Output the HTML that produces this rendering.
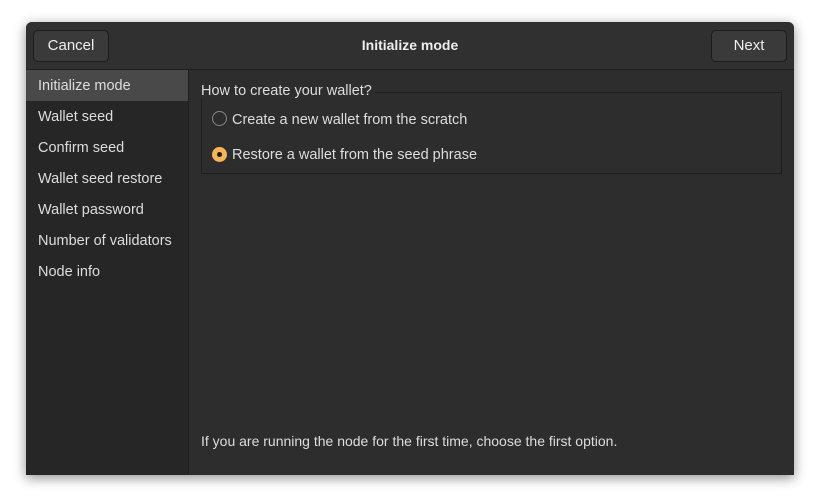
<!DOCTYPE html>
<html><head><style>
body{margin:0;width:820px;height:504px;background:#fff;font-family:"Liberation Sans",sans-serif;position:relative;overflow:hidden}
.win{position:absolute;left:26px;top:22px;width:768px;height:453px;background:#2d2d2d;border-radius:6px 6px 0 0;box-shadow:0 3px 12px rgba(0,0,0,.45);overflow:hidden}
.hdr{position:absolute;left:0;top:0;width:768px;height:47px;background:#303030;border-bottom:1px solid #1f1f1f}
.btn{position:absolute;top:8px;height:30px;width:74px;background:#3a3a3a;border:1px solid #1c1c1c;border-radius:5px;color:#eee;font-size:15px;line-height:30px;text-align:center}
.title{position:absolute;left:0;right:0;top:0;line-height:47px;text-align:center;color:#eee;font-weight:bold;font-size:14px}
.side{position:absolute;left:0;top:48px;width:162px;height:405px;background:#262626;border-right:1px solid #1e1e1e}
.row{height:31px;line-height:33px;padding-left:12px;color:#ddd;font-size:14.5px}
.row.sel{background:#494949}
.t{position:absolute;color:#ddd;font-size:14.5px}
.frame{position:absolute;left:175px;top:70px;width:579px;height:80px;border:1px solid #1f1f1f}
.radio{position:absolute;width:15px;height:15px;border-radius:50%;border:1px solid #888;box-sizing:border-box}
</style></head><body>
<div class="win">
 <div class="hdr">
  <div class="title">Initialize mode</div>
  <div class="btn" style="left:7px">Cancel</div>
  <div class="btn" style="left:685px">Next</div>
 </div>
 <div class="side">
  <div class="row sel">Initialize mode</div>
  <div class="row">Wallet seed</div>
  <div class="row">Confirm seed</div>
  <div class="row">Wallet seed restore</div>
  <div class="row">Wallet password</div>
  <div class="row">Number of validators</div>
  <div class="row">Node info</div>
 </div>
 <div class="frame"></div>
 <div class="t" style="left:175px;top:61px;background:#2d2d2d;padding-right:3px;z-index:2">How to create your wallet?</div>
 <div class="radio" style="left:186px;top:89px"></div>
 <div class="t" style="left:206px;top:90px">Create a new wallet from the scratch</div>
 <div class="radio" style="left:186px;top:125px;background:#f7b35a;border:none"><div style="position:absolute;left:5px;top:5px;width:5px;height:5px;border-radius:50%;background:#1a1a1a"></div></div>
 <div class="t" style="left:206px;top:125px">Restore a wallet from the seed phrase</div>
 <div class="t" style="left:175px;top:411px;font-size:14px">If you are running the node for the first time, choose the first option.</div>
</div>
</body></html>
